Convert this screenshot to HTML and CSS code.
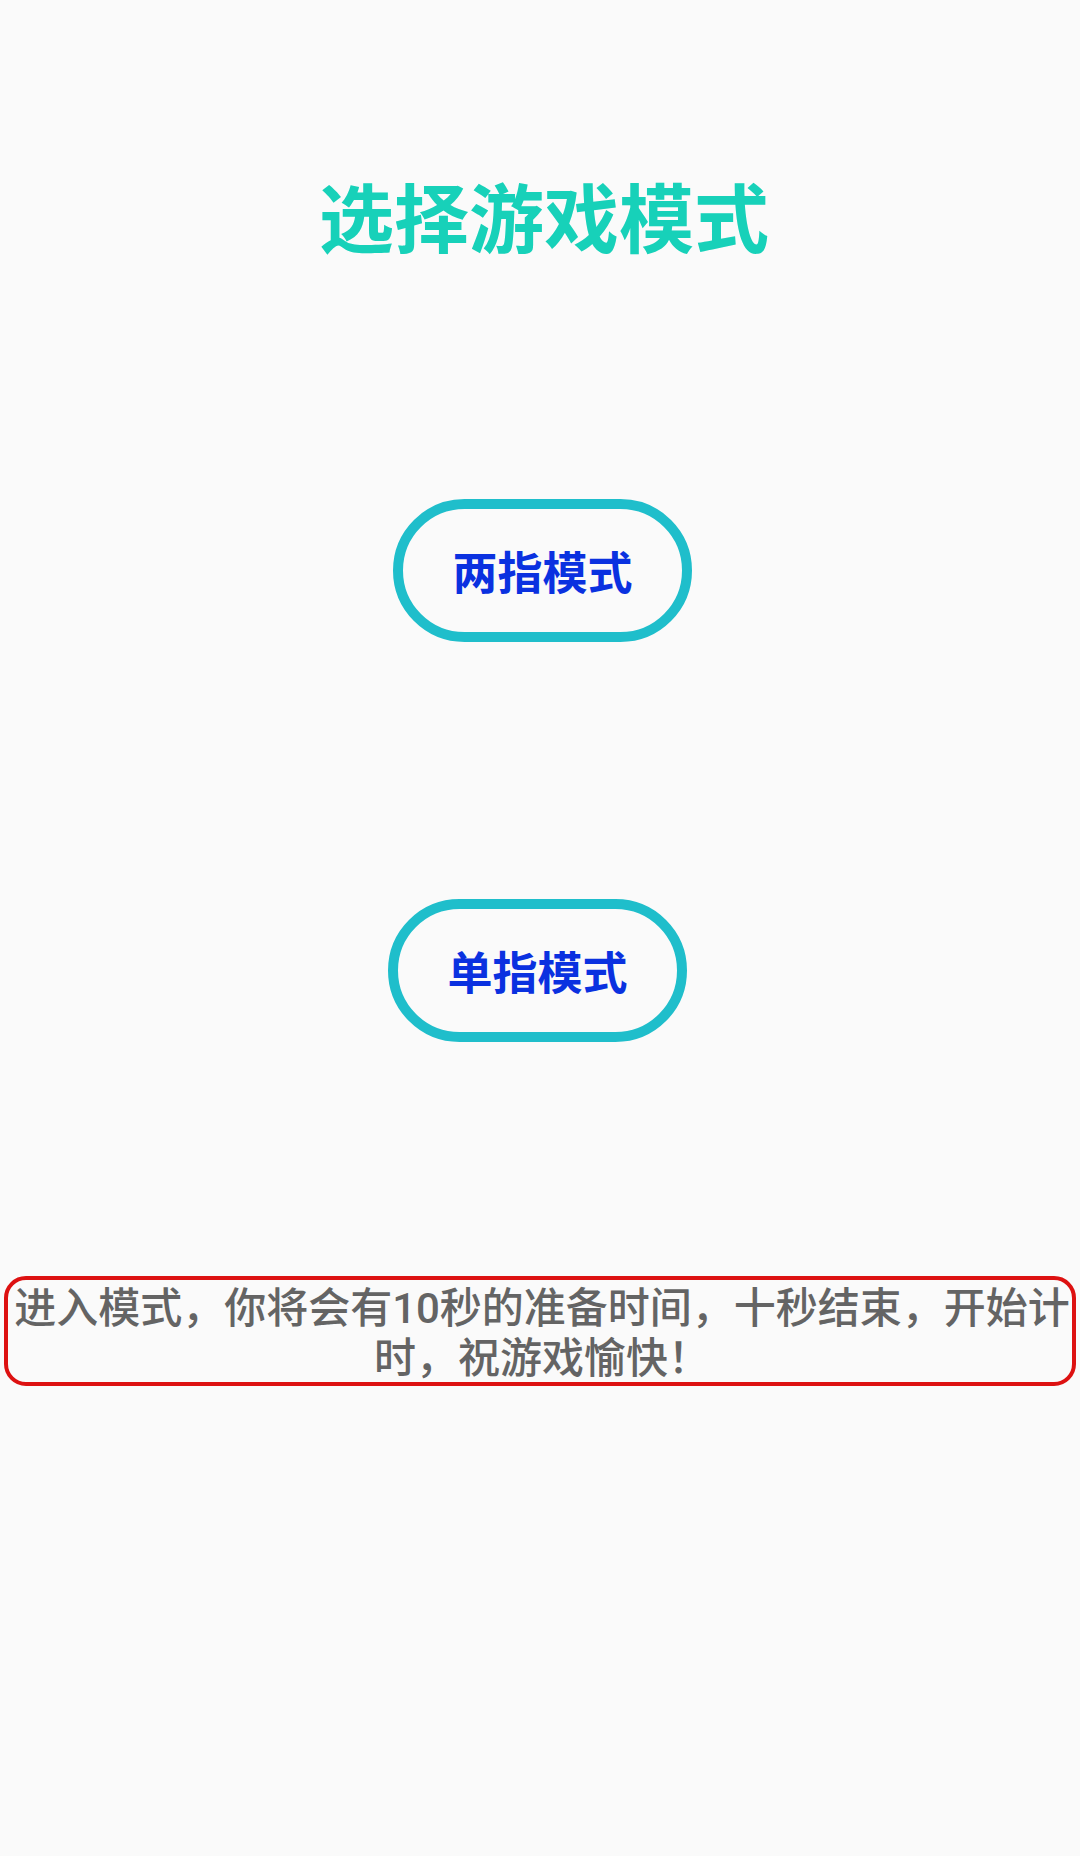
FILE: index.html
```html
<!DOCTYPE html>
<html lang="zh-CN">
<head>
<meta charset="utf-8">
<title>选择游戏模式</title>
<link rel="stylesheet" href="styles.css">
</head>
<body>
<div class="page">
  <h1 class="title">选择游戏模式</h1>
  <button class="mode-btn mode-btn--two">两指模式</button>
  <button class="mode-btn mode-btn--one">单指模式</button>
  <p class="note">进入模式，你将会有10秒的准备时间，十秒结束，开始计时，祝游戏愉快！</p>
</div>
</body>
</html>
```
FILE: styles.css
```css
html, body {
  margin: 0;
  padding: 0;
  background: #fafafa;
}
body {
  width: 1080px;
  height: 1856px;
  font-family: Roboto, "Noto Sans CJK SC", sans-serif;
}
.page {
  display: flex;
  flex-direction: column;
  align-items: center;
  padding-top: 177px;
}
.title {
  margin: 0 0 0 8px;
  font-size: 75px;
  line-height: 75px;
  height: 75px;
  font-weight: 700;
  color: #17d1b9;
  font-family: "Noto Sans CJK SC", sans-serif;
}
.mode-btn {
  box-sizing: border-box;
  width: 299px;
  height: 143px;
  border: 10px solid #1fbecb;
  border-radius: 72px;
  background: #fafafa;
  color: #0a31e0;
  font-family: "Noto Sans CJK SC", sans-serif;
  font-size: 45px;
  line-height: 1;
  font-weight: 700;
  display: flex;
  align-items: center;
  justify-content: center;
  padding: 0;
  align-self: flex-start;
}
.mode-btn--two {
  margin-top: 247px;
  margin-left: 393px;
}
.mode-btn--one {
  margin-top: 257px;
  margin-left: 388px;
}
.note {
  box-sizing: border-box;
  align-self: flex-start;
  margin: 234px 0 0 4px;
  width: 1072px;
  height: 110px;
  border: 4px solid #dd1111;
  border-radius: 22px;
  padding: 4px 0 0 4px;
  color: #646464;
  font-size: 42px;
  font-weight: 500;
  line-height: 50px;
  text-align: center;
}
```
